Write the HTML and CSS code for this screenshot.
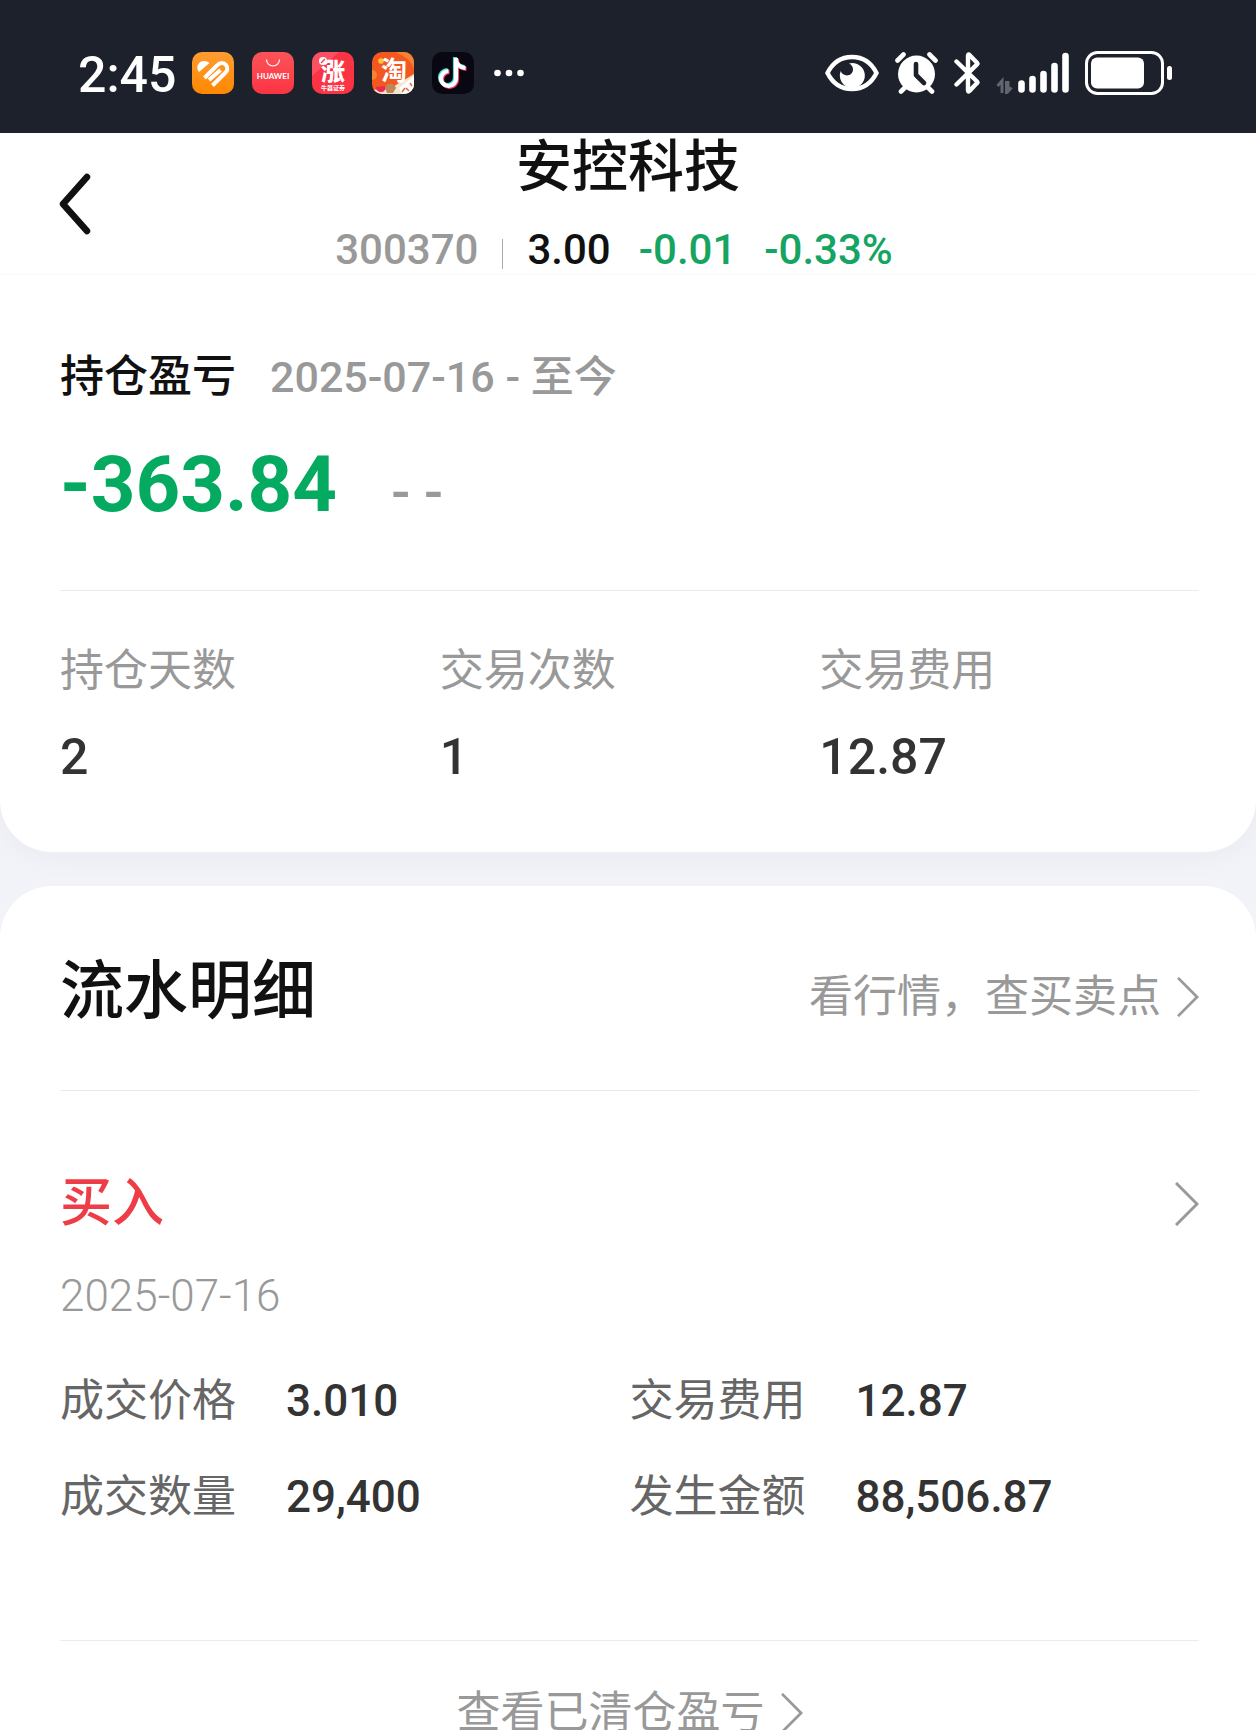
FILE: index.html
```html
<!DOCTYPE html>
<html lang="zh-CN">
<head>
<meta charset="utf-8">
<meta name="viewport" content="width=device-width, initial-scale=1">
<title>安控科技</title>
<link rel="stylesheet" href="styles.css">
</head>
<body>
<div class="app">
  <div class="status">
    <div class="status-left">
      <span class="clock">2:45</span>
      <svg class="app-icon" viewBox="0 0 42 42" aria-hidden="true">
        <defs>
          <linearGradient id="orange" x1="0" y1="0" x2="0" y2="1"><stop offset="0" stop-color="#ff9c33"/><stop offset="1" stop-color="#ff8800"/></linearGradient>
          <linearGradient id="red" x1="0" y1="0" x2="0" y2="1"><stop offset="0" stop-color="#fb5458"/><stop offset="1" stop-color="#fb3443"/></linearGradient>
        </defs>
        <rect width="42" height="42" rx="10" fill="url(#orange)"/>
        <path d="M7 20C3 15 6.500 9 12 9c2.500 0 4 .8 5.500 2z" fill="#fff"/>
        <path d="M12.500 26L25 13.500c3-3.500 7-3 9-.5s1.500 5.500-.5 7.500L20.500 33.500M17 28L28.500 18" fill="none" stroke="#fff" stroke-width="4"/>
      </svg>
      <svg class="app-icon" viewBox="0 0 42 42" aria-hidden="true">
        <rect width="42" height="42" rx="10" fill="url(#red)"/>
        <path d="M14.500 7.500a6.500 6.500 0 0 0 13 0" fill="none" stroke="#fff" stroke-width="1.200"/>
        <text x="21" y="27" class="icon-brand">HUAWEI</text>
      </svg>
      <svg class="app-icon" viewBox="0 0 42 42" aria-hidden="true">
        <rect width="42" height="42" rx="10" fill="#fa3345"/>
        <path d="M0 24V10A10 10 0 0 1 10 0h17z" fill="#fb5064"/>
        <text x="21" y="28" class="icon-rise">涨</text>
        <circle cx="11" cy="9" r="4" fill="#fff"/>
        <path d="M9 11l4-4" stroke="#fa3345" stroke-width="1.200"/>
        <text x="21" y="38" class="icon-tiny">牛器证券</text>
      </svg>
      <svg class="app-icon" viewBox="0 0 42 42" aria-hidden="true">
        <defs><clipPath id="tile"><rect width="42" height="42" rx="10"/></clipPath></defs>
        <g clip-path="url(#tile)">
          <rect width="42" height="42" fill="#f2581f"/>
          <path d="M24 0h18v17C38 6 32 5 24 0z" fill="#f58235"/>
          <circle cx="0" cy="23" r="5" fill="#f58235"/>
          <path d="M0 37c8 2 13 1 19-1l23-14v20H0z" fill="#f5e6cf"/>
          <path d="M27 36L42 24v18H30z" fill="#fff"/>
          <path d="M4 35l9-1c1 4-1 6-4 6s-5-2-5-5z" fill="#ed294e"/>
          <path d="M13 36c1-6 9-6 11 0l-3 5h-6z" fill="#c18558"/>
          <path d="M30 40l3-4M34 36l3 3M38 31l2 3" stroke="#e36a40" stroke-width="1.500"/>
          <circle cx="9" cy="9" r="2.800" fill="#ffc53a"/>
          <text x="22" y="28" class="icon-tao">淘</text>
        </g>
      </svg>
      <svg class="app-icon" viewBox="0 0 42 42" aria-hidden="true">
        <rect width="42" height="42" rx="10" fill="#090812"/>
        <g fill="none" stroke-width="4.200">
          <path d="M23 5v20.500a7.500 7.500 0 1 1-7.500-7.500M23 7c.5 4 4 7.500 9.500 8" stroke="#3cdcd8"/>
          <path d="M25 7v20.500a7.500 7.500 0 1 1-7.500-7.500M25 9c.5 4 4 7.500 9.500 8" stroke="#ef4463"/>
          <path d="M24 6v20.500a7.500 7.500 0 1 1-7.500-7.500M24 8c.5 4 4 7.500 9.500 8" stroke="#fff"/>
        </g>
      </svg>
      <svg class="dots" viewBox="0 0 30 8" fill="#fff" aria-hidden="true"><circle cx="3.500" cy="4" r="3.300"/><circle cx="15" cy="4" r="3.300"/><circle cx="26.500" cy="4" r="3.300"/></svg>
    </div>
    <div class="status-right">
      <svg width="54" height="38" viewBox="0 0 54 38" aria-hidden="true">
        <path d="M2.500 19C8 8 17 3 27 3s19 5 24.500 16C46 30 37 35 27 35S8 30 2.500 19z" fill="none" stroke="#fff" stroke-width="4.400"/>
        <path d="M24 9.500a12.500 12.500 0 1 1-8.300 7.500c2 6 11.500 6 12.300-1 .2-3-1.500-5.500-4-6.500z" fill="#fff"/>
      </svg>
      <svg width="43" height="42" viewBox="0 0 43 42" aria-hidden="true">
        <circle cx="21.500" cy="22" r="18.500" fill="#fff"/>
        <path d="M2.500 8.500l6-6M40.500 8.500l-6-6M6 39.500l4-4M37 39.500l-4-4" stroke="#fff" stroke-width="4.600" stroke-linecap="round"/>
        <path d="M21 12v11l8 8" fill="none" stroke="#1d212c" stroke-width="4.600" stroke-linecap="round" stroke-linejoin="round"/>
      </svg>
      <svg width="26" height="42" viewBox="0 0 26 42" aria-hidden="true">
        <path d="M2.500 9.500L23 29.500c.6.600.6 1 0 1.600L15.500 39c-.8.800-1.500.4-1.500-.6V3.600c0-1 .7-1.400 1.500-.6L23 10.800c.6.600.6 1 0 1.600L2.500 32.500" fill="none" stroke="#fff" stroke-width="4.400" stroke-linecap="round"/>
      </svg>
      <svg width="73" height="42" viewBox="0 0 73 42" aria-hidden="true">
        <path d="M1.500 34L6 29v12M10.500 29v12l5-5.500M12 29v10" fill="none" stroke="#62656d" stroke-width="3"/>
        <path d="M25.500 31.500v6M36.500 27v10.500M47.500 22v15.500M58.500 14v23.500M69.500 4v33.500" stroke="#fff" stroke-width="6.600" stroke-linecap="round"/>
      </svg>
      <svg width="87" height="44" viewBox="0 0 87 44" aria-hidden="true">
        <rect x="1.500" y="1.500" width="76" height="41" rx="11" fill="none" stroke="#fff" stroke-width="3"/>
        <rect x="6" y="6.500" width="53" height="31" rx="6" fill="#fff"/>
        <rect x="82" y="15" width="5" height="14" rx="2.500" fill="#fff"/>
      </svg>
    </div>
  </div>

  <header class="header">
    <button class="back" type="button" aria-label="返回">
      <svg width="32" height="62" viewBox="0 0 32 62" fill="none" stroke="#111" stroke-width="6.500" stroke-linecap="round" stroke-linejoin="round" aria-hidden="true"><path d="M28 4L4 31l24 27"/></svg>
    </button>
    <div class="heading">
      <h1 class="stock-name">安控科技</h1>
      <div class="quote">
        <span class="muted">300370</span>
        <span class="bar"></span>
        <span>3.00</span>
        <span class="down">-0.01</span>
        <span class="down">-0.33%</span>
      </div>
    </div>
  </header>

  <main class="content">
    <section class="card summary">
      <div class="period">
        <h2 class="period-label">持仓盈亏</h2>
        <span class="period-range">2025-07-16 - 至今</span>
      </div>
      <div class="profit">
        <strong class="profit-value">-363.84</strong>
        <span class="profit-rate">- -</span>
      </div>
      <dl class="stats">
        <div><dt>持仓天数</dt><dd>2</dd></div>
        <div><dt>交易次数</dt><dd>1</dd></div>
        <div><dt>交易费用</dt><dd>12.87</dd></div>
      </dl>
    </section>

    <section class="card flow">
      <div class="flow-head">
        <h2 class="flow-title">流水明细</h2>
        <a class="link" href="#">看行情，查买卖点<svg class="chevron" viewBox="0 0 24 44" aria-hidden="true"><path d="M1 1l21 21L1 43"/></svg></a>
      </div>
      <article class="trade">
        <a class="trade-head" href="#"><span>买入</span><svg class="chevron" viewBox="0 0 24 44" aria-hidden="true"><path d="M1 1l21 21L1 43"/></svg></a>
        <time class="trade-date" datetime="2025-07-16">2025-07-16</time>
        <dl class="details">
          <div><dt>成交价格</dt><dd>3.010</dd></div>
          <div><dt>交易费用</dt><dd>12.87</dd></div>
          <div><dt>成交数量</dt><dd>29,400</dd></div>
          <div><dt>发生金额</dt><dd>88,506.87</dd></div>
        </dl>
      </article>
      <div class="more"><a class="link" href="#">查看已清仓盈亏<svg class="chevron" viewBox="0 0 24 44" aria-hidden="true"><path d="M1 1l21 21L1 43"/></svg></a></div>
    </section>
  </main>
</div>
</body>
</html>
```

FILE: styles.css
```css
* {
  box-sizing: border-box;
}

body,
h1,
h2,
dl,
dd {
  margin: 0;
}

body {
  background: #f2f3f8;
  color: #111;
  font-family: Roboto, "Noto Sans CJK SC", sans-serif;
}

a {
  color: inherit;
  text-decoration: none;
}

.app {
  display: flex;
  flex-direction: column;
  height: 100vh;
}

/* Status bar */
.status {
  display: flex;
  flex: none;
  align-items: center;
  justify-content: space-between;
  padding: 49px 84px 36px 78px;
  background: #1d212c;
  color: #fff;
}

.status-left {
  display: flex;
  align-items: center;
  gap: 18px;
}

.clock {
  width: 96px;
  padding-top: 4px;
  font-size: 50px;
  font-weight: 500;
  line-height: 44px;
  white-space: nowrap;
}

.app-icon {
  width: 42px;
  height: 42px;
}

.dots {
  width: 30px;
  height: 8px;
  margin-left: 2px;
}

.icon-brand,
.icon-rise,
.icon-tiny,
.icon-tao {
  fill: #fff;
  text-anchor: middle;
}

.icon-brand {
  font: 700 8px Lato, sans-serif;
}

.icon-rise {
  font: 900 24px "Noto Sans CJK SC", sans-serif;
}

.icon-tiny {
  font: 700 6px "Noto Sans CJK SC", sans-serif;
}

.icon-tao {
  font: 700 26px "Noto Sans CJK SC", sans-serif;
}

.status-right {
  display: flex;
  align-items: center;
  gap: 16px;
}

/* Title bar */
.header {
  display: grid;
  flex: none;
  grid-template-columns: 1fr auto 1fr;
  padding: 0 56px 4px;
  border-bottom: 1px solid #fafafa;
  background: #fff;
}

.back {
  justify-self: start;
  align-self: start;
  height: 62px;
  margin-top: 40px;
  padding: 0 3px;
  border: 0;
  background: none;
}

.heading {
  display: flex;
  flex-direction: column;
  align-items: center;
}

.stock-name {
  font-size: 56px;
  font-weight: 500;
  line-height: 68px;
}

.quote {
  display: flex;
  align-items: center;
  gap: 28px;
  margin-top: 29px;
  padding-right: 28px;
  font-size: 42px;
  font-weight: 500;
  line-height: 40px;
}

.bar {
  width: 1px;
  height: 30px;
  margin: 8px -4px 0;
  background: #aaa;
}

.muted {
  color: #999;
}

.down {
  color: #16a462;
}

/* Scrolling body */
.content {
  display: flex;
  flex: 1;
  flex-direction: column;
  gap: 34px;
  min-height: 0;
  overflow-y: auto;
  scrollbar-width: none;
}

.card {
  flex: none;
  padding: 0 57px 0 60px;
  background: #fff;
}

.summary {
  padding-top: 74px;
  border-radius: 0 0 52px 52px;
  box-shadow: 0 4px 32px rgba(30, 40, 80, 0.04);
}

.period {
  display: flex;
  align-items: center;
  gap: 34px;
  line-height: 56px;
}

.period-label {
  font-size: 44px;
  font-weight: 500;
}

.period-range {
  color: #999;
  font-size: 43px;
  font-weight: 500;
}

.profit {
  display: flex;
  align-items: baseline;
  gap: 54px;
  padding: 36px 0 54px;
  border-bottom: 1px solid #ebebeb;
  line-height: 88px;
}

.profit-value {
  color: #04aa5f;
  font-size: 78px;
  font-weight: 700;
}

.profit-rate {
  color: #999;
  font-size: 56px;
  font-weight: 500;
}

.stats {
  display: grid;
  grid-template-columns: repeat(3, 1fr);
  padding: 50px 0 63px;
}

.stats dt {
  color: #999;
  font-size: 44px;
  line-height: 60px;
}

.stats dd {
  margin-top: 24px;
  color: #333;
  font-size: 50px;
  font-weight: 500;
  line-height: 64px;
}

.flow {
  flex: 1 0 auto;
  border-radius: 52px 52px 0 0;
}

.flow-head {
  display: flex;
  align-items: center;
  justify-content: space-between;
  padding: 68px 0 60px;
  border-bottom: 1px solid #ebebeb;
}

.flow-title {
  font-size: 64px;
  font-weight: 500;
  line-height: 76px;
}

.link {
  display: inline-flex;
  align-items: center;
  gap: 16px;
  color: #999;
  font-size: 44px;
  line-height: 60px;
}

.flow-head .link {
  padding-top: 10px;
}

.chevron {
  width: 24px;
  height: 44px;
  fill: none;
  stroke: #999;
  stroke-width: 3;
}

.link .chevron {
  width: 22px;
  height: 40px;
}

.trade {
  padding: 81px 0 113px;
  border-bottom: 1px solid #ebebeb;
}

.trade-head {
  display: flex;
  align-items: center;
  justify-content: space-between;
  color: #ee3d47;
  font-size: 52px;
  font-weight: 500;
  line-height: 64px;
}

.trade-date {
  display: block;
  margin-top: 30px;
  color: #999;
  font-size: 44px;
  font-weight: 300;
  line-height: 60px;
}

.details {
  display: grid;
  grid-template-columns: 1fr 1fr;
  gap: 36px 0;
  margin-top: 45px;
}

.details div {
  display: grid;
  grid-template-columns: 226px 1fr;
  align-items: center;
  line-height: 60px;
}

.details dt {
  color: #666;
  font-size: 44px;
}

.details dd {
  color: #333;
  font-size: 44px;
  font-weight: 500;
}

.more {
  display: flex;
  justify-content: center;
  padding: 42px 0 40px;
}
```
